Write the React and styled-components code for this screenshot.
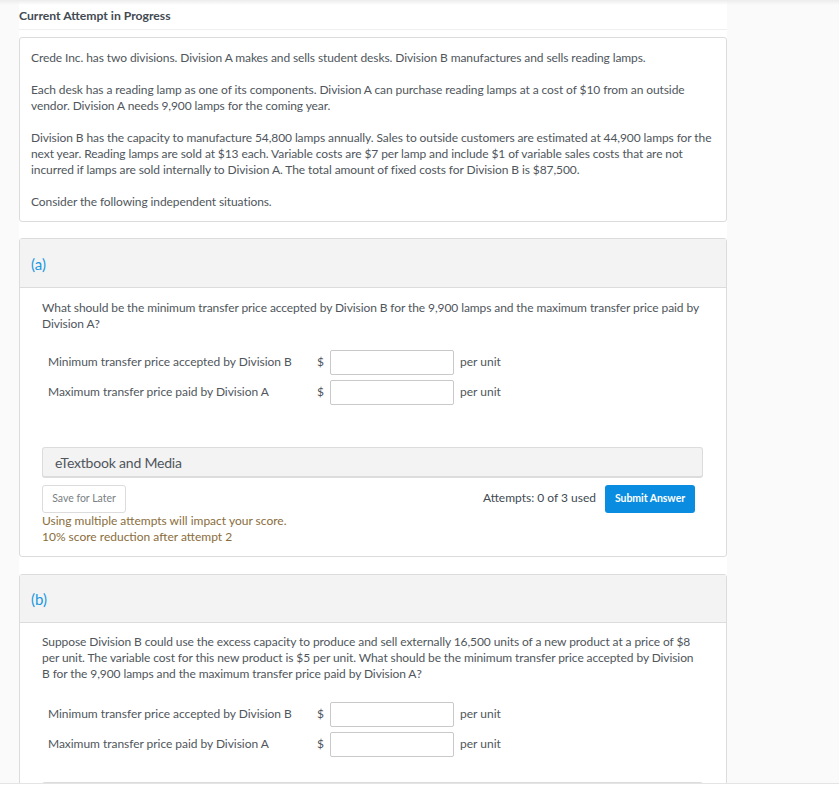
import React from 'react';
import styled, { createGlobalStyle } from 'styled-components';

const GlobalStyle = createGlobalStyle`
  html, body {
    margin: 0;
    padding: 0;
    height: 100%;
    overflow: hidden;
    background: #fafafa;
  }
  * {
    box-sizing: border-box;
  }
`;

const parts = [
  {
    id: 'a',
    question: (
      <>
        What should be the minimum transfer price accepted by Division B for the 9,900 lamps and the maximum
        transfer price paid by Division A?
      </>
    ),
    showFooter: true,
  },
  {
    id: 'b',
    question: (
      <>
        Suppose Division B could use the excess capacity to produce and sell externally 16,500 units of a new
        product at a price of $8 per unit. The variable cost for this new product is $5 per unit. What should be
        the minimum transfer price accepted by Division B for the 9,900 lamps and the maximum transfer price paid
        by Division A?
      </>
    ),
    showFooter: false,
  },
];

const AnswerRows = () => (
  <Rows>
    <Row>
      <RowLabel>Minimum transfer price accepted by Division B</RowLabel>
      <Dollar>$</Dollar>
      <AmountInput type="text" aria-label="Minimum transfer price" />
      <Unit>per unit</Unit>
    </Row>
    <Row>
      <RowLabel>Maximum transfer price paid by Division A</RowLabel>
      <Dollar>$</Dollar>
      <AmountInput type="text" aria-label="Maximum transfer price" />
      <Unit>per unit</Unit>
    </Row>
  </Rows>
);

const App = () => {
  return (
    <Page>
      <GlobalStyle />
      <TopShade />
      <Main>
        <Heading>Current Attempt in Progress</Heading>
        <IntroCard>
          <p>Crede Inc. has two divisions. Division A makes and sells student desks. Division B manufactures and sells reading lamps.</p>
          <p>
            Each desk has a reading lamp as one of its components. Division A can purchase reading lamps at a cost of
            $10 from an outside vendor. Division A needs 9,900 lamps for the coming year.
          </p>
          <p>
            Division B has the capacity to manufacture 54,800 lamps annually. Sales to outside customers are estimated
            at 44,900 lamps for the next year. Reading lamps are sold at $13 each. Variable costs are $7 per lamp and
            include $1 of variable sales costs that are not incurred if lamps are sold internally to Division A. The
            total amount of fixed costs for Division B is $87,500.
          </p>
          <p>Consider the following independent situations.</p>
        </IntroCard>

        {parts.map((part) => (
          <PartCard key={part.id}>
            <PartHeader $short={!part.showFooter}>({part.id})</PartHeader>
            <PartBody $short={!part.showFooter}>
              <Question $short={!part.showFooter}>{part.question}</Question>
              <AnswerRows />
              {part.showFooter ? (
                <>
                  <MediaBar>eTextbook and Media</MediaBar>
                  <Actions>
                    <SaveButton type="button">Save for Later</SaveButton>
                    <SubmitGroup>
                      <Attempts>Attempts: 0 of 3 used</Attempts>
                      <SubmitButton type="button">Submit Answer</SubmitButton>
                    </SubmitGroup>
                  </Actions>
                  <Notice>
                    Using multiple attempts will impact your score.
                    <br />
                    10% score reduction after attempt 2
                  </Notice>
                </>
              ) : (
                <MediaBar $cut />
              )}
            </PartBody>
          </PartCard>
        ))}
      </Main>
      <BottomBar />
    </Page>
  );
};

export default App;

const Page = styled.div`
  position: relative;
  height: 795px;
  overflow: hidden;
  font-family: 'Lato', sans-serif;
  font-size: 12px;
  line-height: 16px;
  letter-spacing: -0.09px;
  color: #50565c;
  background: #fafafa;
`;

const TopShade = styled.div`
  position: absolute;
  top: 0;
  left: 0;
  right: 0;
  height: 5px;
  background: linear-gradient(#ececec, #fafafa00);
`;

const Main = styled.main`
  width: 708px;
  margin-left: 19px;
  min-height: 795px;
  background: #fff;
`;

const Heading = styled.h1`
  margin: 0 0 7px;
  height: 30px;
  padding-top: 8px;
  border-bottom: 1px solid #efefef;
  font-size: 12.2px;
  font-weight: 700;
  line-height: 16px;
  letter-spacing: 0;
  color: #424a52;
  background: #fff;
`;

const IntroCard = styled.section`
  height: 185px;
  margin-bottom: 16px;
  padding: 12px 12px 0 11px;
  border: 1px solid #dcdcdc;
  border-radius: 3px;

  p {
    margin: 0 0 16px;
  }
`;

const PartCard = styled.section`
  height: 319px;
  margin-bottom: 17px;
  border: 1px solid #dcdcdc;
  border-radius: 3px;
`;

const PartHeader = styled.h2`
  height: ${(props) => (props.$short ? '48px' : '49px')};
  margin: 0;
  padding: ${(props) => (props.$short ? '14px' : '15px')} 11px 0;
  border-bottom: 1px solid #dcdcdc;
  font-size: 15px;
  font-weight: 400;
  line-height: 20px;
  letter-spacing: 0;
  color: #1a98e0;
  background: #f3f3f3;
`;

const PartBody = styled.div`
  padding: ${(props) => (props.$short ? '11px' : '12px')} 23px 0 22px;
`;

const Question = styled.p`
  margin: 0 0 ${(props) => (props.$short ? '20px' : '18px')};
`;

const Rows = styled.div`
  display: flex;
  flex-direction: column;
  gap: 5px;
  padding-left: 6px;
`;

const Row = styled.div`
  display: flex;
  align-items: center;
  height: 25px;
`;

const RowLabel = styled.span`
  width: 269px;
  padding-bottom: 1px;
  letter-spacing: -0.04px;
`;

const Dollar = styled.span`
  width: 13px;
  padding-bottom: 2px;
`;

const AmountInput = styled.input`
  width: 124px;
  height: 25px;
  padding: 0 4px;
  border: 1px solid #c9c9c9;
  border-radius: 2px;
  background: #fff;
  outline: none;
`;

const Unit = styled.span`
  margin-left: 6px;
  padding-bottom: 2px;
  letter-spacing: 0;
`;

const MediaBar = styled.div`
  display: flex;
  align-items: center;
  height: 31px;
  margin-top: ${(props) => (props.$cut ? '25px' : '42px')};
  padding: 1px 0 0 12px;
  border: 1px solid #dcdcdc;
  border-bottom-width: 2px;
  border-radius: 3px;
  font-size: 14px;
  letter-spacing: -0.2px;
  color: #50565c;
  background: #f3f3f3;
`;

const Actions = styled.div`
  display: flex;
  justify-content: space-between;
  align-items: center;
  height: 28px;
  margin-top: 7px;
  padding-right: 8px;
`;

const SaveButton = styled.button`
  width: 84px;
  height: 28px;
  padding: 0 0 2px;
  border: 1px solid #dcdcdc;
  border-radius: 3px;
  font-family: inherit;
  font-size: 10.5px;
  letter-spacing: 0;
  color: #7a7f84;
  background: #fff;
`;

const SubmitGroup = styled.div`
  display: flex;
  align-items: center;
  gap: 9px;
`;

const Attempts = styled.span`
  padding-bottom: 2px;
  letter-spacing: 0;
  color: #424a52;
`;

const SubmitButton = styled.button`
  width: 90px;
  height: 28px;
  padding: 0 0 2px;
  border: none;
  border-radius: 3px;
  font-family: inherit;
  font-size: 10.5px;
  font-weight: 700;
  letter-spacing: -0.05px;
  color: #fff;
  background: #0a8de0;
`;

const Notice = styled.div`
  letter-spacing: 0;
  color: #8a6d3b;
`;

const BottomBar = styled.div`
  position: absolute;
  left: 0;
  right: 0;
  bottom: 0;
  height: 12px;
  border-top: 1px solid #e4e4e4;
  background: #fff;
`;
